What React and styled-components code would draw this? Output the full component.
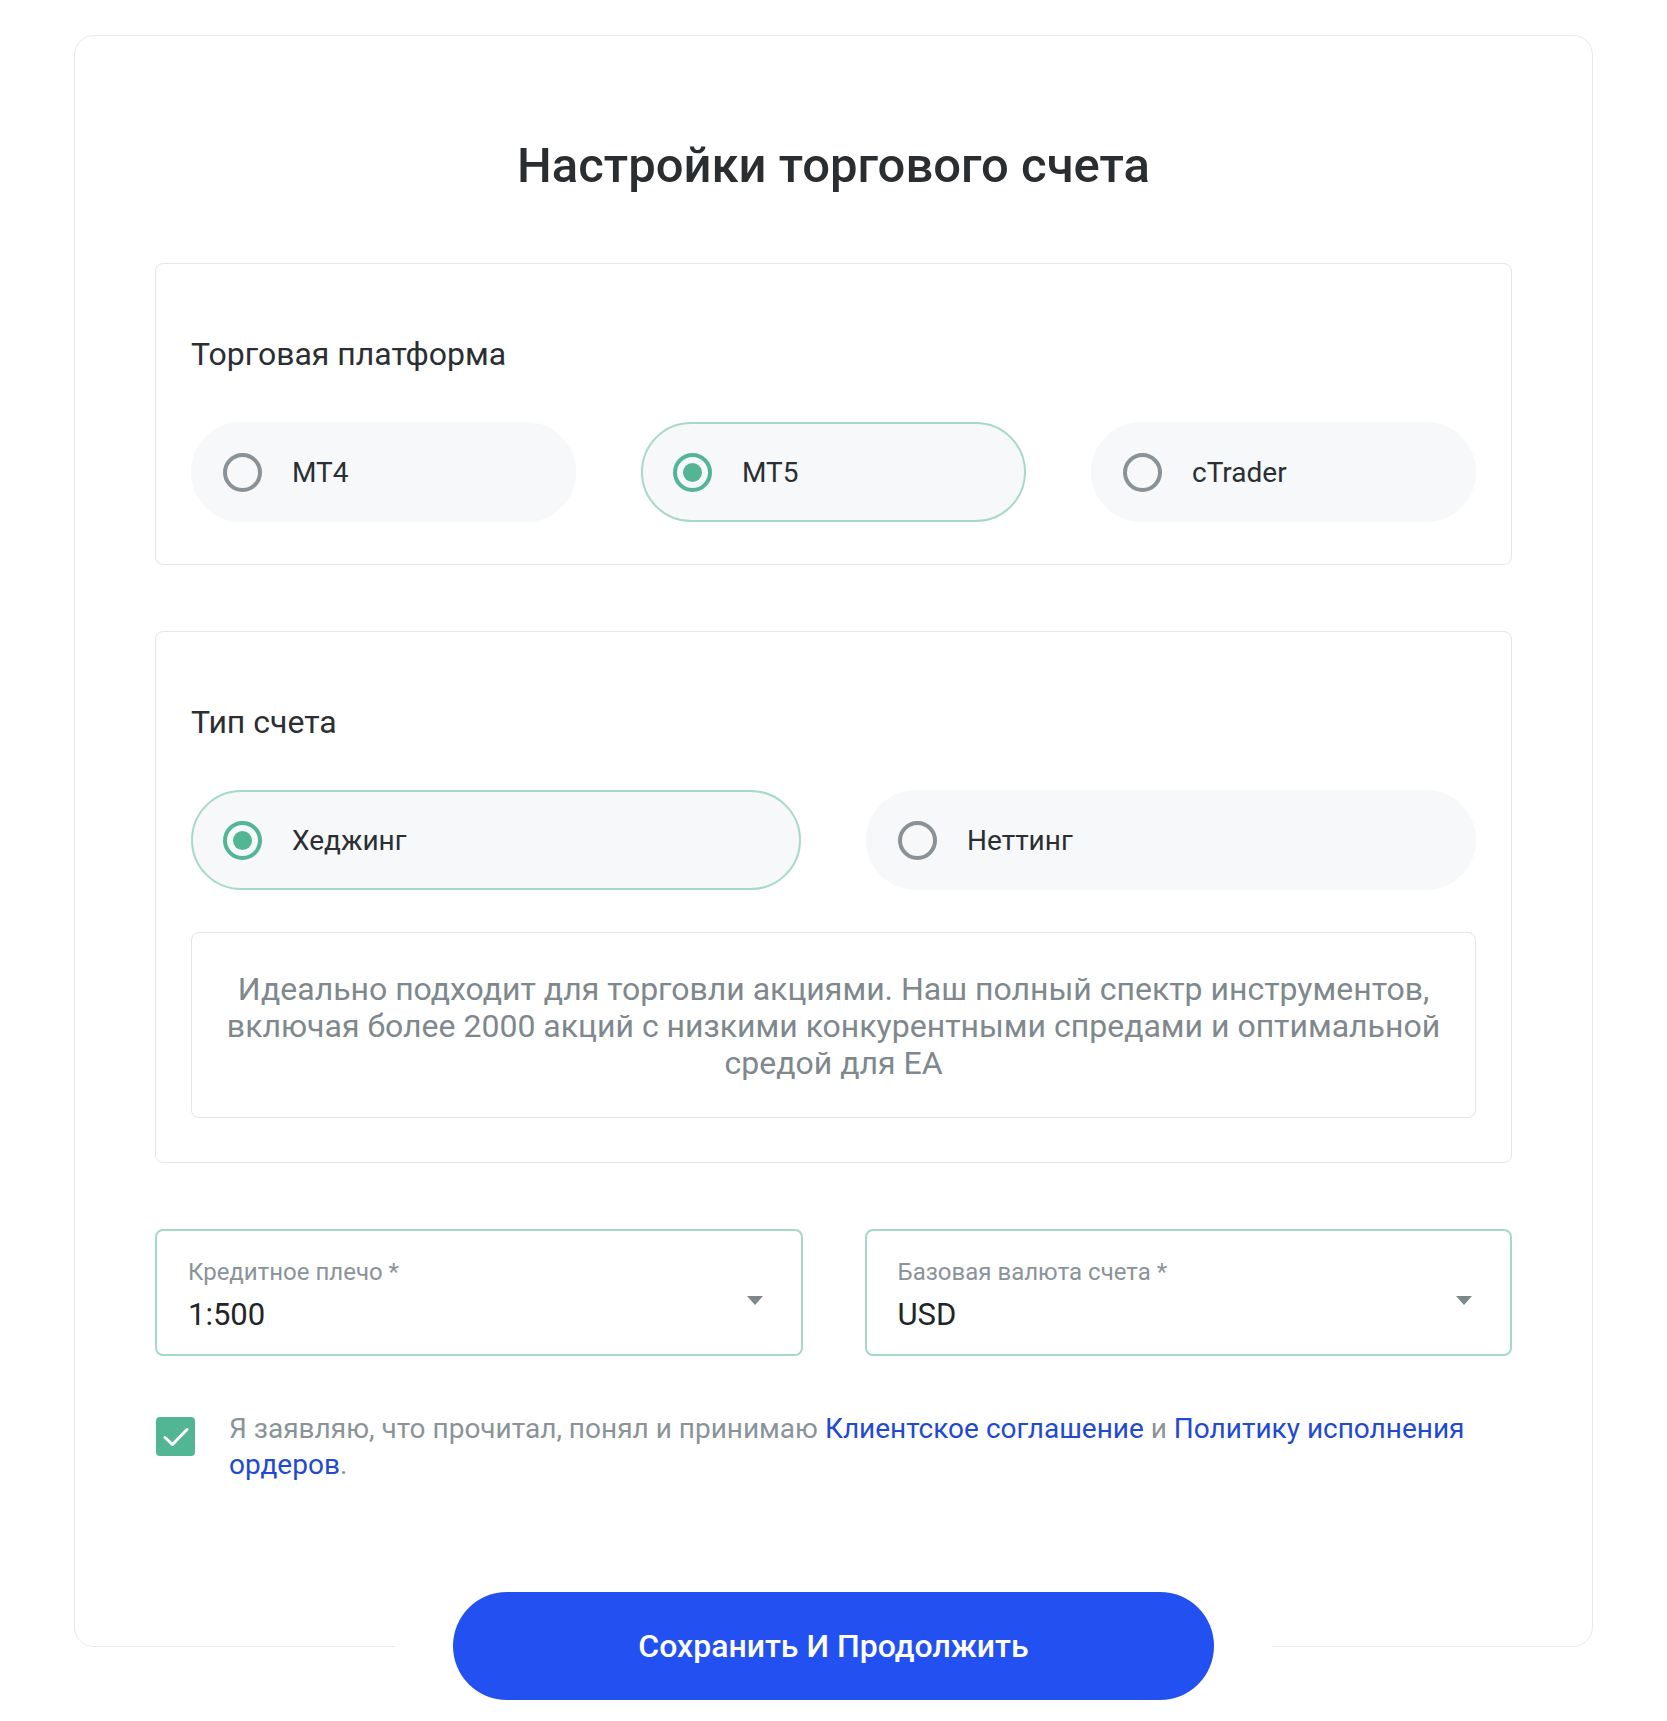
import React, { useState } from "react";
import styled, { createGlobalStyle } from "styled-components";

const GlobalStyle = createGlobalStyle`
  * { box-sizing: border-box; }
  body {
    margin: 0;
    background: #ffffff;
    font-family: Roboto, "Noto Sans", Arial, sans-serif;
    color: #2b2f33;
  }
`;

const Page = styled.div`
  padding: 35px 74px 74px;
`;

const Card = styled.div`
  border: 1px solid #e6e9eb;
  border-radius: 20px;
  padding: 100px 80px 0;
  display: flex;
  flex-direction: column;
`;

const Title = styled.h1`
  margin: 0 0 67px;
  font-family: Roboto, "Noto Sans", sans-serif;
  font-weight: 500;
  font-size: 49px;
  line-height: 60px;
  text-align: center;
  color: #2a2e31;
`;

const Section = styled.section`
  border: 1px solid #e3e6e8;
  border-radius: 8px;
  padding: 72px 35px ${(p) => (p.$first ? "42px" : "44px")};
  margin-top: ${(p) => (p.$first ? "0" : "66px")};
`;

const SectionLabel = styled.div`
  font-size: 32px;
  line-height: 36px;
  color: #2b2f33;
  margin-bottom: 50px;
`;

const OptionsGrid = styled.div`
  display: grid;
  grid-template-columns: repeat(${(p) => p.$cols}, 1fr);
  gap: 65px;
`;

const Pill = styled.button`
  height: 100px;
  border-radius: 50px;
  border: 2px solid ${(p) => (p.$active ? "#a6d9c7" : "#f6f8f9")};
  background: #f6f8f9;
  display: flex;
  align-items: center;
  gap: 30px;
  padding: 0 0 0 30px;
  font-family: Roboto, "Noto Sans", sans-serif;
  font-size: 28px;
  color: #2b2f33;
  cursor: pointer;
  text-align: left;
`;

const Radio = styled.span`
  width: 39px;
  height: 39px;
  border-radius: 50%;
  border: 4px solid ${(p) => (p.$active ? "#52b694" : "#899297")};
  display: flex;
  align-items: center;
  justify-content: center;
  flex-shrink: 0;
  &::after {
    content: "";
    width: 19px;
    height: 19px;
    border-radius: 50%;
    background: ${(p) => (p.$active ? "#52b694" : "transparent")};
  }
`;

const Description = styled.div`
  margin-top: 42px;
  border: 1px solid #e3e6e8;
  border-radius: 8px;
  padding: 38px 20px 35px;
  font-size: 32px;
  line-height: 37px;
  color: #7e888d;
  text-align: center;
`;

const SelectsRow = styled.div`
  margin-top: 66px;
  display: grid;
  grid-template-columns: 1fr 1fr;
  gap: 62px;
`;

const SelectBox = styled.div`
  height: 127px;
  border: 2px solid #a6d9c7;
  border-radius: 8px;
  padding: 28px 38px 0 31px;
  display: flex;
  align-items: flex-start;
  justify-content: space-between;
`;

const SelectText = styled.div`
  display: flex;
  flex-direction: column;
  gap: 13px;
`;

const SelectLabel = styled.span`
  font-size: 24px;
  line-height: 26px;
  color: #8a9399;
`;

const SelectValue = styled.span`
  font-size: 31px;
  line-height: 34px;
  color: #222528;
`;

const Arrow = styled.svg`
  margin-top: 37px;
  width: 16px;
  height: 9px;
  flex-shrink: 0;
`;

const AgreeRow = styled.div`
  margin-top: 55px;
  display: flex;
  align-items: flex-start;
  gap: 34px;
  padding-left: 1px;
`;

const CheckBox = styled.span`
  width: 39px;
  height: 39px;
  margin-top: 6px;
  border-radius: 4px;
  background: #52b694;
  display: flex;
  align-items: center;
  justify-content: center;
  flex-shrink: 0;
`;

const AgreeText = styled.p`
  margin: 0;
  font-size: 28px;
  line-height: 36px;
  color: #8a9398;
`;

const Link = styled.a`
  color: #2149d2;
  text-decoration: none;
`;

const ButtonWrap = styled.div`
  align-self: center;
  margin-top: 109px;
  margin-bottom: -54px;
  padding: 0 58px;
  background: #ffffff;
`;

const PrimaryButton = styled.button`
  width: 761px;
  height: 108px;
  border: none;
  border-radius: 54px;
  background: #2351f1;
  color: #ffffff;
  font-family: Roboto, "Noto Sans", sans-serif;
  font-weight: 500;
  font-size: 32px;
  cursor: pointer;
`;

function Option({ label, active, onClick }) {
  return (
    <Pill type="button" $active={active} onClick={onClick}>
      <Radio $active={active} />
      {label}
    </Pill>
  );
}

function Select({ label, value }) {
  return (
    <SelectBox>
      <SelectText>
        <SelectLabel>{label}</SelectLabel>
        <SelectValue>{value}</SelectValue>
      </SelectText>
      <Arrow viewBox="0 0 16 9">
        <path d="M0 0 L16 0 L8 9 Z" fill="#7e878c" />
      </Arrow>
    </SelectBox>
  );
}

export default function App() {
  const [platform, setPlatform] = useState("MT5");
  const [type, setType] = useState("Хеджинг");
  const platforms = ["MT4", "MT5", "cTrader"];
  const types = ["Хеджинг", "Неттинг"];

  return (
    <>
      <GlobalStyle />
      <Page>
        <Card>
          <Title>Настройки торгового счета</Title>

          <Section $first>
            <SectionLabel>Торговая платформа</SectionLabel>
            <OptionsGrid $cols={3}>
              {platforms.map((p) => (
                <Option key={p} label={p} active={platform === p} onClick={() => setPlatform(p)} />
              ))}
            </OptionsGrid>
          </Section>

          <Section>
            <SectionLabel>Тип счета</SectionLabel>
            <OptionsGrid $cols={2}>
              {types.map((t) => (
                <Option key={t} label={t} active={type === t} onClick={() => setType(t)} />
              ))}
            </OptionsGrid>
            <Description>
              Идеально подходит для торговли акциями. Наш полный спектр инструментов,
              включая более 2000 акций с низкими конкурентными спредами и оптимальной
              средой для EA
            </Description>
          </Section>

          <SelectsRow>
            <Select label="Кредитное плечо *" value="1:500" />
            <Select label="Базовая валюта счета *" value="USD" />
          </SelectsRow>

          <AgreeRow>
            <CheckBox>
              <svg width="26" height="20" viewBox="0 0 26 20">
                <path d="M2 10.5 L9.5 17.5 L24 2.5" fill="none" stroke="#ffffff" strokeWidth="3" strokeLinecap="round" strokeLinejoin="round" />
              </svg>
            </CheckBox>
            <AgreeText>
              Я заявляю, что прочитал, понял и принимаю <Link href="#">Клиентское соглашение</Link> и{" "}
              <Link href="#">Политику исполнения</Link> <Link href="#">ордеров</Link>.
            </AgreeText>
          </AgreeRow>

          <ButtonWrap>
            <PrimaryButton type="button">Сохранить И Продолжить</PrimaryButton>
          </ButtonWrap>
        </Card>
      </Page>
    </>
  );
}
